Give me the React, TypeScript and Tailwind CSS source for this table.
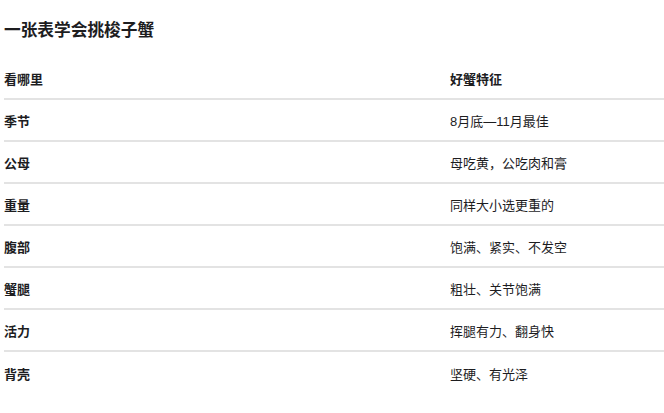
import React from "react";

const rows: [string, string][] = [
  ["季节", "8月底—11月最佳"],
  ["公母", "母吃黄，公吃肉和膏"],
  ["重量", "同样大小选更重的"],
  ["腹部", "饱满、紧实、不发空"],
  ["蟹腿", "粗壮、关节饱满"],
  ["活力", "挥腿有力、翻身快"],
  ["背壳", "坚硬、有光泽"],
];

export default function App() {
  return (
    <div
      className="w-[664px] h-[413px] overflow-hidden bg-white pl-[4px] text-[#1d1d1f]"
      style={{ fontFamily: '"Liberation Sans", "Noto Sans CJK SC", sans-serif' }}
    >
      <div className="pt-[19px] h-[24px] box-content text-[16.7px] leading-[24px] font-bold">一张表学会挑梭子蟹</div>
      <div className="mt-[15px]">
        <div className="flex h-[42px] items-center border-b-2 border-[#e3e3e3] pt-[4px] box-border text-[13px] font-bold">
          <div className="w-[446px]">看哪里</div>
          <div className="flex-1">好蟹特征</div>
        </div>
        {rows.map(([a, b], i) => (
          <div
            key={a}
            className={`flex h-[42px] items-center pt-[3px] text-[13px] box-border ${i < rows.length - 1 ? "border-b-2 border-[#e3e3e3]" : ""}`}
          >
            <div className="w-[446px] font-semibold">{a}</div>
            <div className="flex-1">{b}</div>
          </div>
        ))}
      </div>
    </div>
  );
}
